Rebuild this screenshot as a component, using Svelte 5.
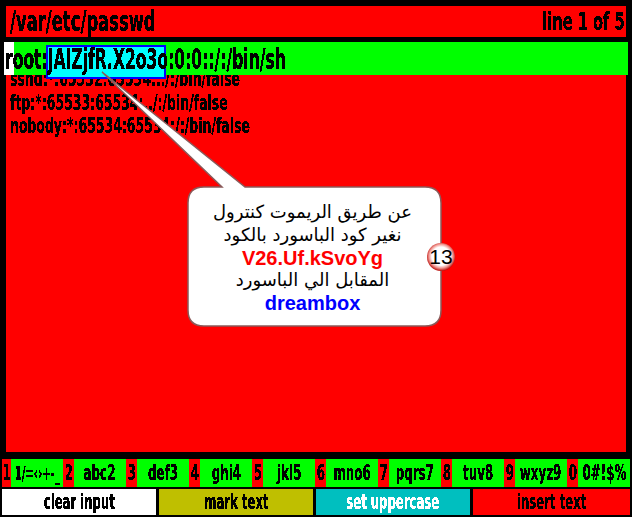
<script>
  const keys = [
    ['1', '1/=‹›+-_'], ['2', 'abc2'], ['3', 'def3'], ['4', 'ghi4'], ['5', 'jkl5'],
    ['6', 'mno6'], ['7', 'pqrs7'], ['8', 'tuv8'], ['9', 'wxyz9'], ['0', '0#!$%']
  ];
  const buttons = [
    ['clear input', 'white'], ['mark text', 'olive'], ['set uppercase', 'teal'], ['insert text', 'red']
  ];
</script>

<svg class="defs" width="0" height="0" aria-hidden="true">
  <filter id="aliased" x="0" y="0" width="100%" height="100%">
    <feComponentTransfer>
      <feFuncA type="discrete" tableValues="0 1 1" />
    </feComponentTransfer>
  </filter>
</svg>

<div class="screen">
  <header class="title">
    <span class="txt t-big">/var/etc/passwd</span>
    <span class="txt t-line">line 1 of 5</span>
  </header>

  <div class="active">
    <span class="caret"></span>
    <span class="sel"></span>
    <span class="txt t-root">root:JAIZjfR.X2o3o:0:0::/:/bin/sh</span>
  </div>

  <main class="lines">
    <div class="txt row">sshd:*:65532:65534:../:/bin/false</div>
    <div class="txt row">ftp:*:65533:65534:../:/bin/false</div>
    <div class="txt row">nobody:*:65534:65534:/:/bin/false</div>
  </main>

  <div class="keys">
    {#each keys as [n, label], i}
      <div class="key" class:first={i === 0}>
        <span class="num"><span class="txt k">{n}</span></span>
        <span class="lab"><span class="txt k" class:sym={i === 0}>{label}</span></span>
      </div>
    {/each}
  </div>

  <div class="actions">
    {#each buttons as [label, cls]}
      <div class="btn {cls}"><span class="txt b">{label}</span></div>
    {/each}
  </div>

  <svg class="bubble" width="632" height="517" viewBox="0 0 632 517" aria-hidden="true">
    <defs>
      <radialGradient id="ball" cx="0.5" cy="0.47" r="0.53">
        <stop offset="0.62" stop-color="#ffffff" />
        <stop offset="0.8" stop-color="#f29a94" />
        <stop offset="1" stop-color="#b80c08" />
      </radialGradient>
    </defs>
    <path d="M102 72 L245 187 L425 187 Q441 187 441 203 L441 310 Q441 326 425 326 L204 326 Q188 326 188 310 L188 203 Q188 187 204 187 L222 187 Z"
      fill="#ffffff" stroke="#8a5a5a" stroke-width="1.5" />
    <circle cx="441" cy="257" r="14" fill="url(#ball)" />
  </svg>

  <div class="note">
    <p dir="rtl">عن طريق الريموت كنترول</p>
    <p dir="rtl">نغير كود الباسورد بالكود</p>
    <p class="code">V26.Uf.kSvoYg</p>
    <p dir="rtl">المقابل الي الباسورد</p>
    <p class="pw">dreambox</p>
  </div>
  <div class="badge">13</div>
</div>

<style>
  :global(body) { margin: 0; background: #000; }
  .defs { position: absolute; }
  .screen {
    position: relative;
    width: 632px;
    height: 517px;
    background: #000;
    overflow: hidden;
    padding-top: 6px;
    box-sizing: border-box;
    font-family: "DejaVu Sans Condensed", "DejaVu Sans", sans-serif;
    font-weight: 700;
  }
  .txt {
    display: inline-block;
    transform-origin: 0 50%;
    white-space: nowrap;
    color: #000;
    filter: url(#aliased);
    line-height: 1.2;
  }
  .title {
    margin: 0 6px;
    height: 31px;
    background: #f00;
    display: flex;
    justify-content: space-between;
    align-items: center;
    padding: 0 1px 0 4px;
  }
  .t-big { font-size: 28px; transform: scaleX(0.65); }
  .t-line { font-size: 25px; transform: scaleX(0.65); transform-origin: 100% 50%; }
  .active {
    position: relative;
    z-index: 1;
    margin: 5px 4px 0;
    height: 33px;
    background: #0f0;
    display: flex;
    align-items: center;
  }
  .caret { position: absolute; left: 0; top: 0; width: 10px; height: 33px; background: #fff; }
  .sel {
    position: absolute;
    left: 42px;
    top: 3px;
    width: 120px;
    height: 34px;
    box-sizing: border-box;
    background: #0ff;
    border: 2px solid #00f;
  }
  .t-root { font-size: 28px; transform: scaleX(0.618); position: relative; left: 1px; top: 1px; }
  .lines {
    margin: 0 6px;
    height: 377px;
    background: #f00;
    padding: 0 0 0 4px;
    box-sizing: border-box;
  }
  .row {
    display: block;
    font-size: 22px;
    height: 23.5px;
    line-height: 23.5px;
    transform: scaleX(0.63);
    position: relative;
    top: -8px;
  }
  .keys {
    display: flex;
    margin: 7px 2px 0;
    height: 28px;
  }
  .key { display: flex; flex: 0 0 63px; min-width: 0; }
  .key.first { flex-basis: 61px; }
  .num, .lab { display: flex; align-items: center; justify-content: center; overflow: hidden; min-width: 0; }
  .num { flex: 0 0 11px; background: #f00; }
  .first .num { flex-basis: 9px; }
  .lab { flex: 1 1 0; background: #0f0; }
  .k { flex: none; font-size: 22px; transform: scaleX(0.6); transform-origin: 50% 50%; }
  .k.sym { font-size: 20px; transform: scaleX(0.56); }
  .actions {
    display: grid;
    grid-template-columns: 154px 154px 154px 157px;
    gap: 3px;
    margin: 2px 2px 0;
    height: 26px;
  }
  .btn { display: flex; align-items: center; justify-content: center; overflow: hidden; }
  .b { font-size: 22px; transform: scaleX(0.59); transform-origin: 50% 50%; }
  .white { background: #fff; }
  .olive { background: #bfbf00; }
  .teal { background: #00bfbf; }
  .teal .b { color: #fff; }
  .red { background: #f00; }
  .bubble { position: absolute; left: 0; top: 0; z-index: 2; }
  .note {
    position: absolute;
    z-index: 3;
    left: 186px;
    top: 201px;
    width: 253px;
    text-align: center;
    font-family: "DejaVu Sans", sans-serif;
    font-weight: 400;
    font-size: 18px;
    line-height: 22.75px;
    color: #000;
  }
  .note p { margin: 0; white-space: nowrap; }
  .code, .pw { font-family: "Liberation Sans", sans-serif; font-weight: 700; font-size: 20px; }
  .code { color: #f00; }
  .pw { color: #00f; }
  .badge {
    position: absolute;
    z-index: 3;
    left: 427px;
    top: 243px;
    width: 28px;
    height: 28px;
    display: flex;
    align-items: center;
    justify-content: center;
    font-family: "Liberation Sans", sans-serif;
    font-weight: 400;
    font-size: 21px;
    color: #000;
  }
</style>
